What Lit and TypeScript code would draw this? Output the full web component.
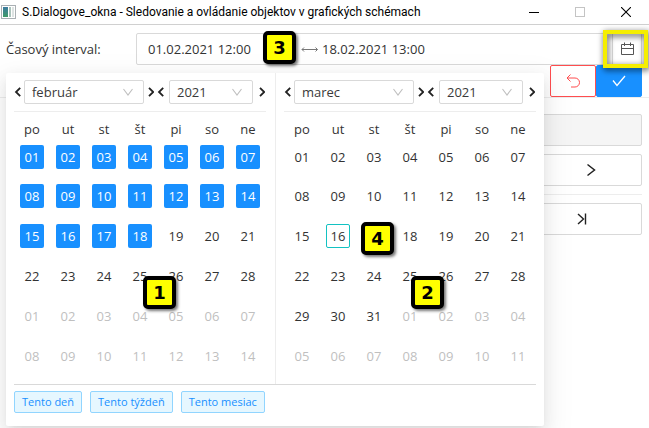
import { LitElement, html, css, svg } from "lit";
import { customElement, property } from "lit/decorators.js";
import { classMap } from "lit/directives/class-map.js";

const chevron = (d: string) => html`<svg width="8" height="12" viewBox="0 0 8 12" aria-hidden="true">
  ${svg`<path d=${d} fill="none" stroke="#222" stroke-width="1.8" />`}
</svg>`;
const LEFT = "M6.2 1.8 L2 6 L6.2 10.2";
const RIGHT = "M3 1.8 L7.2 6 L3 10.2";

const WEEKDAYS = ["po", "ut", "st", "št", "pi", "so", "ne"];

@customElement("month-panel")
export class MonthPanel extends LitElement {
  @property() month = "";
  @property() year = "";
  @property({ type: Number }) days = 28;
  @property({ type: Number }) selectedTo = 0;
  @property({ type: Number }) today = 0;
  /** Day whose cell is taken by a numbered callout. */
  @property({ type: Number }) marked = 0;

  static styles = css`
    :host { display: block; }
    .head { display: flex; align-items: center; gap: 3px; height: 38px; border-bottom: 1px solid #ededed; }
    .pair { display: flex; align-items: center; gap: 2px; }
    .pair.year { gap: 4px; }
    button { display: flex; padding: 0; border: 0; background: none; }
    .select { display: flex; position: relative; }
    select {
      appearance: none; box-sizing: border-box; height: 24px; margin: 0; padding: 0 7px;
      border: 1px solid #d9d9d9; border-radius: 2px; background: #fff;
      font: inherit; color: #3a3a3a;
    }
    .month select { width: 120px; }
    .year select { width: 84px; }
    .select svg { position: absolute; right: 10px; top: 8px; pointer-events: none; }
    table { width: 100%; table-layout: fixed; border-collapse: collapse; }
    th { height: 33px; padding: 0; box-sizing: border-box; font-weight: 400; text-align: center; color: #333; }
    td { height: 40px; padding: 0; vertical-align: top; }
    tr.first td { height: 39px; }
    .day {
      display: block; box-sizing: border-box; width: 24px; height: 24px; margin: 0 auto;
      border: 1px solid transparent; border-radius: 2px; background: none;
      font: inherit; line-height: 22px; text-align: center; color: #333;
    }
    .day.on { background: #1890ff; color: #fff; }
    .day.today { border-color: #13c2c2; }
    .day.out { color: #bfbfbf; }
  `;

  private day(index: number) {
    const out = index > this.days;
    const n = out ? index - this.days : index;
    if (!out && n === this.marked) return html`<td></td>`;
    const cls = { day: true, out, on: !out && n <= this.selectedTo, today: !out && n === this.today };
    return html`<td><button class=${classMap(cls)}>${String(n).padStart(2, "0")}</button></td>`;
  }

  private picker(kind: string, label: string, value: string) {
    return html`<span class="pair ${kind}">
      <button aria-label="${label} späť">${chevron(LEFT)}</button>
      <span class="select">
        <select aria-label=${label}><option>${value}</option></select>
        <svg width="12" height="8" viewBox="0 0 12 8" aria-hidden="true">
          <path d="M1.5 1 L6 7 L10.5 1" fill="none" stroke="#bfbfbf" stroke-width="1.1" />
        </svg>
      </span>
      <button aria-label="${label} dopredu">${chevron(RIGHT)}</button>
    </span>`;
  }

  render() {
    return html`
      <div class="head">
        ${this.picker("month", "Mesiac", this.month)}
        ${this.picker("year", "Rok", this.year)}
      </div>
      <table>
        <thead><tr>${WEEKDAYS.map((d) => html`<th scope="col">${d}</th>`)}</tr></thead>
        <tbody>
          ${[0, 1, 2, 3, 4, 5].map((w) => html`<tr class=${w ? "" : "first"}>${WEEKDAYS.map((_, i) => this.day(w * 7 + i + 1))}</tr>`)}
        </tbody>
      </table>
    `;
  }
}

@customElement("app-root")
export class AppRoot extends LitElement {
  static styles = css`
    :host {
      display: block; position: relative; min-height: 100vh; overflow: hidden; background: #fff;
      font: 13px/20px "Open Sans", "Noto Sans", sans-serif; color: #333;
    }
    button, input { font: inherit; color: inherit; margin: 0; box-sizing: border-box; }
    .titlebar { display: flex; align-items: center; height: 24px; border-bottom: 1px solid #d0d0d0; }
    .logo { margin-right: 6px; }
    .titlebar h1 { flex: 1; margin: 0; font: 400 12px/16px Roboto, sans-serif; color: #000; white-space: nowrap; }
    .titlebar button { display: flex; justify-content: center; width: 46px; padding: 0; border: 0; background: none; }

    .form { display: flex; align-items: center; padding: 8px 7px 0 6px; }
    .form label { width: 130px; }
    .range {
      position: relative; flex: 1; display: flex; align-items: center; height: 32px; box-sizing: border-box;
      border: 1px solid #d9d9d9; border-radius: 2px;
    }
    .range input { min-width: 0; border: 0; background: none; height: 30px; outline: 0; }
    .range .from { width: 164px; padding: 0 0 0 11px; }
    .range .to { flex: 1; padding: 0 0 0 4px; }
    .calendar {
      display: flex; align-items: center; justify-content: center; width: 29px; height: 30px;
      padding: 0; border: 0; border-left: 1px solid #d9d9d9; background: #fff;
    }
    .highlight {
      position: absolute; right: -7px; top: -4px; width: 45px; height: 38px; box-sizing: border-box;
      border: 4px solid #f5ee00; filter: drop-shadow(1px 2px 3px #000b); pointer-events: none;
    }

    .confirm { display: flex; justify-content: flex-end; height: 32px; padding-right: 7px; border-bottom: 1px solid #ededed; }
    .confirm button { display: flex; align-items: center; justify-content: center; width: 46px; padding: 0; border: 1px solid #ff4d4f; border-radius: 2px; background: #fff; }
    .confirm .ok { border-color: #1890ff; background: #1890ff; }

    .steps { display: flex; flex-direction: column; align-items: flex-end; gap: 8px; padding: 16px 7px 0 6px; }
    .steps input { width: 100%; height: 32px; border: 1px solid #d9d9d9; border-radius: 2px; background: #f5f5f5; }
    .steps button { display: flex; align-items: center; justify-content: center; width: 102px; height: 32px; padding: 0; border: 1px solid #d9d9d9; border-radius: 2px; background: #fff; }
    .steps .last { width: 120px; }
    .steps hr { width: 100%; margin: 0; border: 0; border-top: 1px solid #ededed; }

    .popup {
      position: absolute; left: 6px; top: 73px; width: 538px; box-sizing: border-box; padding: 0 8px 13px;
      background: #fff; border-radius: 2px;
      box-shadow: 0 3px 6px -4px #0000001f, 0 6px 16px #00000014, 0 9px 28px 8px #0000000d;
    }
    .months { display: grid; grid-template-columns: 262px 1fr; border-bottom: 1px solid #d9d9d9; }
    .months month-panel:first-child { padding-right: 9px; border-right: 1px solid #ededed; }
    .months month-panel:last-child { padding-left: 8px; }
    .tags { display: flex; gap: 8px; padding-top: 6px; }
    .tags button {
      height: 22px; padding: 0 7px; border: 1px solid #91d5ff; border-radius: 2px; background: #e6f7ff;
      font-size: 11px; line-height: 20px; color: #1890ff; white-space: nowrap;
    }

    .badge {
      position: absolute; box-sizing: border-box; width: 33px; height: 33px; border: 4px solid #000; border-radius: 5px;
      background: #ff0; box-shadow: 2px 2px 3px #0008;
      font: bold 18px/25px "DejaVu Sans", sans-serif; text-align: center; color: #000;
    }
    .b1 { left: 137px; top: 203px; }
    .b2 { left: 405px; top: 203px; }
    .b3 { left: 126px; top: -3px; }
    .b4 { left: 355px; top: 149px; }
  `;

  private badge(n: number) {
    return html`<span class="badge b${n}">${n}</span>`;
  }

  render() {
    return html`
      <header class="titlebar">
        <svg class="logo" width="16" height="14" viewBox="0 0 16 14" aria-hidden="true">
          <defs><linearGradient id="g" x1="0" y1="0" x2="0" y2="1"><stop offset="0" stop-color="#3c7ba0" /><stop offset="1" stop-color="#3f9a68" /></linearGradient></defs>
          <rect x="1.5" y=".5" width="14" height="13" fill="#fff" stroke="#aab0b4" />
          <rect x="3" y="2" width="5" height="10" fill="url(#g)" />
          <rect x="9" y="2" width="2" height="10" fill="#a9c3bb" />
          <rect x="12" y="2" width="2" height="10" fill="#dde3e2" />
        </svg>
        <h1>S.Dialogove_okna - Sledovanie a ovládanie objektov v grafických schémach</h1>
        <button aria-label="Minimalizovať"><svg width="10" height="10"><path d="M0 5.5H10" stroke="#000" /></svg></button>
        <button aria-label="Maximalizovať" disabled><svg width="10" height="10"><rect x=".5" y=".5" width="9" height="9" fill="none" stroke="#c4c4c4" /></svg></button>
        <button aria-label="Zavrieť"><svg width="10" height="10"><path d="M0 0L10 10M10 0L0 10" stroke="#000" stroke-width="1.1" /></svg></button>
      </header>

      <div class="form">
        <label for="from">Časový interval:</label>
        <div class="range">
          <input id="from" class="from" value="01.02.2021 12:00" />
          <svg width="17" height="7" viewBox="0 0 17 7" aria-hidden="true">
            <path d="M1 3.5H16.5M3 1.5L1 3.5L3 5.5M14.5 1.5L16.5 3.5L14.5 5.5" fill="none" stroke="#777" />
          </svg>
          <input class="to" aria-label="Koniec intervalu" value="18.02.2021 13:00" />
          <button class="calendar" aria-label="Kalendár">
            <svg width="14" height="14" viewBox="0 0 14 14" aria-hidden="true">
              <path d="M1.5 2.5H13.5V12.5H1.5ZM1.5 6.5H13.5M4.5 .5V4M10.5 .5V4" fill="none" stroke="#555" />
            </svg>
          </button>
          <span class="highlight"></span>
          ${this.badge(3)}
        </div>
      </div>

      <div class="confirm">
        <button aria-label="Späť">
          <svg width="14" height="14" viewBox="0 0 14 14" aria-hidden="true">
            <path d="M4.5 .5L1 4L4.5 7.5M1 4H9A4.5 4.5 0 0 1 9 13H5" fill="none" stroke="#ff4d4f" />
          </svg>
        </button>
        <button class="ok" aria-label="Potvrdiť">
          <svg width="14" height="12" viewBox="0 0 14 12" aria-hidden="true">
            <path d="M1 5.5L5 10.5L13 1" fill="none" stroke="#fff" stroke-width="1.3" />
          </svg>
        </button>
      </div>

      <div class="steps">
        <input aria-label="Hodnota" disabled />
        <button aria-label="Ďalej">
          <svg width="10" height="14" viewBox="0 0 10 14"><path d="M1.5 1.5L8.5 7L1.5 12.5" fill="none" stroke="#222" stroke-width="1.5" /></svg>
        </button>
        <hr />
        <button class="last" aria-label="Na koniec">
          <svg width="10" height="12" viewBox="0 0 10 12"><path d="M1 1L6.5 6L1 11M8.5 .5V11.5" fill="none" stroke="#222" stroke-width="1.4" /></svg>
        </button>
      </div>

      <div class="popup">
        <div class="months">
          <month-panel month="február" year="2021" days="28" selectedTo="18"></month-panel>
          <month-panel month="marec" year="2021" days="31" today="16" marked="17"></month-panel>
        </div>
        <div class="tags">
          <button>Tento deň</button>
          <button>Tento týždeň</button>
          <button>Tento mesiac</button>
        </div>
        ${this.badge(1)} ${this.badge(2)} ${this.badge(4)}
      </div>
    `;
  }
}
